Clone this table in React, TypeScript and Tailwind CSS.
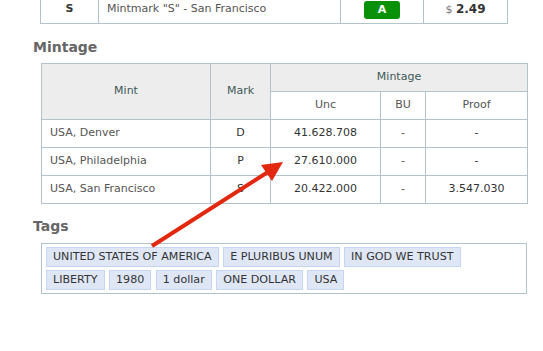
const rows = [
  { mint: "USA, Denver", mark: "D", unc: "41.628.708", bu: "-", proof: "-" },
  { mint: "USA, Philadelphia", mark: "P", unc: "27.610.000", bu: "-", proof: "-" },
  { mint: "USA, San Francisco", mark: "S", unc: "20.422.000", bu: "-", proof: "3.547.030" },
];

const tags = [
  "UNITED STATES OF AMERICA",
  "E PLURIBUS UNUM",
  "IN GOD WE TRUST",
  "LIBERTY",
  "1980",
  "1 dollar",
  "ONE DOLLAR",
  "USA",
];

const cell = "border border-[#b3c3cc] h-[28px] p-0";

export default function App() {
  return (
    <div className="relative w-[543px] h-[351px] overflow-hidden bg-white font-['DejaVu_Sans',Verdana,sans-serif] text-[11px]">
      {/* variety row, cut at the top */}
      <table className="ml-[40px] -mt-[5px] border-collapse table-fixed w-[467px]">
        <tbody>
          <tr className="h-[28px]">
            <td className="w-[58px] border border-[#b3c3cc] text-center font-bold text-[#333]">S</td>
            <td className="w-[242px] border border-[#b3c3cc] pl-[8px] text-[#555]">
              Mintmark "S" - San Francisco
            </td>
            <td className="w-[83px] border border-[#b3c3cc] text-center">
              <span className="inline-block w-[36px] h-[18px] leading-[18px] rounded-[3px] bg-[#0a910a] text-white font-bold">
                A
              </span>
            </td>
            <td className="w-[84px] border border-[#b3c3cc] text-center text-[#333]">
              <span className="text-[#777]">$</span> <span className="font-bold text-[12px]">2.49</span>
            </td>
          </tr>
        </tbody>
      </table>

      <h2 className="ml-[33px] mt-[15px] text-[14px] leading-[17px] font-bold text-[#666]">Mintage</h2>

      <table className="ml-[41px] mt-[7px] border-collapse table-fixed w-[486px] text-[#444]">
        <colgroup>
          <col className="w-[169px]" />
          <col className="w-[60px]" />
          <col className="w-[110px]" />
          <col className="w-[45px]" />
          <col className="w-[102px]" />
        </colgroup>
        <thead>
          <tr className="bg-[#ededed] text-[#3d5858]">
            <th rowSpan={2} className={`${cell} font-normal`}>Mint</th>
            <th rowSpan={2} className={`${cell} font-normal`}>Mark</th>
            <th colSpan={3} className={`${cell} font-normal`}>Mintage</th>
          </tr>
          <tr className="bg-white text-[#555]">
            <th className={`${cell} h-[27px] font-normal`}>Unc</th>
            <th className={`${cell} h-[27px] font-normal`}>BU</th>
            <th className={`${cell} h-[27px] font-normal`}>Proof</th>
          </tr>
        </thead>
        <tbody>
          {rows.map((r) => (
            <tr key={r.mint}>
              <td className={`${cell} pl-[8px] text-[#555]`}>{r.mint}</td>
              <td className={`${cell} text-center text-[#333]`}>{r.mark}</td>
              <td className={`${cell} text-center text-[#333]`}>{r.unc}</td>
              <td className={`${cell} text-center text-[#555]`}>{r.bu}</td>
              <td className={`${cell} text-center text-[#333]`}>{r.proof}</td>
            </tr>
          ))}
        </tbody>
      </table>

      <h2 className="ml-[33px] mt-[14px] text-[14px] leading-[17px] font-bold text-[#666]">Tags</h2>

      <div className="ml-[41px] mt-[8px] w-[486px] border border-[#b3c3cc] px-[4px] pt-[3px] pb-[3px] flex flex-wrap gap-x-[4.5px] gap-y-[3.5px]">
        {tags.map((t) => (
          <span
            key={t}
            className="h-[19.5px] leading-[18px] px-[6px] text-[11.1px] bg-[#dfe7f7] border border-[#c6d5f0] text-[#333]"
          >
            {t}
          </span>
        ))}
      </div>

      {/* annotation arrow */}
      <svg className="absolute left-0 top-0 pointer-events-none" width="543" height="351">
        <line x1="152" y1="246" x2="268" y2="172" stroke="#e2290f" strokeWidth="4" />
        <polygon points="283,162 261,165 272,181" fill="#e2290f" />
      </svg>
    </div>
  );
}
